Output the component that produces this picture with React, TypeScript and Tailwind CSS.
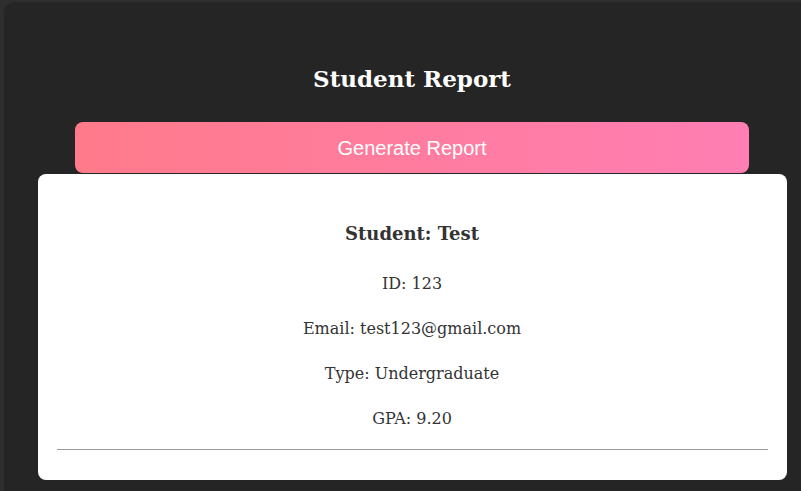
import React from 'react';

interface Student {
  name: string;
  id: string;
  email: string;
  type: string;
  gpa: string;
}

const student: Student = {
  name: 'Test',
  id: '123',
  email: 'test123@gmail.com',
  type: 'Undergraduate',
  gpa: '9.20',
};

const serif = { fontFamily: '"DejaVu Serif", "Liberation Serif", serif' };

const App: React.FC = () => {
  return (
    <div className="w-[801px] h-[491px] overflow-hidden bg-[#2e2e2e] pt-[2px] pl-[4px]">
      <div className="w-[816px] min-h-[500px] bg-[#252525] rounded-tl-[10px] px-[34px] pt-[60px] flex flex-col items-center">
        <h1 className="text-white font-bold text-[23px] leading-[34px]" style={serif}>
          Student Report
        </h1>

        <button
          className="mt-[26px] w-[674px] h-[51px] rounded-[8px] bg-linear-to-r from-[#ff7a8a] to-[#ff7eb3] text-white text-[20px]"
          style={{ fontFamily: '"Liberation Sans", Arial, sans-serif' }}
        >
          Generate Report
        </button>

        {/* Report card */}
        <div className="mt-px w-[749px] h-[306px] bg-white rounded-[8px] px-[19px] pt-[46px] flex flex-col items-center text-[#333]" style={serif}>
          <h2 className="text-[18px] font-semibold leading-[28px]">Student: {student.name}</h2>
          <div className="mt-[24px] flex flex-col items-center gap-[21px] text-[16px] leading-[24px]">
            <p>ID: {student.id}</p>
            <p>Email: {student.email}</p>
            <p>Type: {student.type}</p>
            <p>GPA: {student.gpa}</p>
          </div>
          <hr className="mt-[18px] w-full border-0 border-t border-[#999]" />
        </div>
      </div>
    </div>
  );
};

export default App;
